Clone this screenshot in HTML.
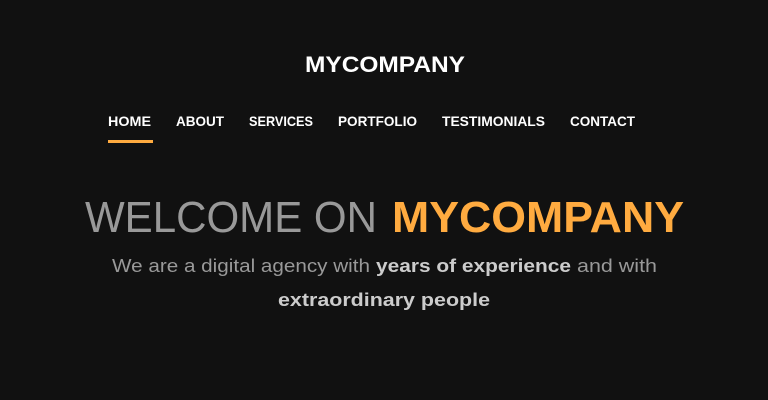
<!DOCTYPE html>
<html><head><meta charset="utf-8"><style>
html,body{margin:0;padding:0;background:#111;width:768px;height:400px;overflow:hidden}
svg{display:block}
text{font-family:"Liberation Sans",Arial,sans-serif}
</style></head><body>
<svg width="768" height="400" viewBox="0 0 768 400">
<rect width="768" height="400" fill="#111"/>
<text x="305" y="72" font-size="22" font-weight="bold" fill="#fff" textLength="160" lengthAdjust="spacingAndGlyphs">MYCOMPANY</text>
<g font-size="14" font-weight="bold" fill="#fff">
<text x="108" y="126" textLength="43" lengthAdjust="spacingAndGlyphs">HOME</text>
<text x="176" y="126" textLength="48" lengthAdjust="spacingAndGlyphs">ABOUT</text>
<text x="249" y="126" textLength="64" lengthAdjust="spacingAndGlyphs">SERVICES</text>
<text x="338" y="126" textLength="79" lengthAdjust="spacingAndGlyphs">PORTFOLIO</text>
<text x="442" y="126" textLength="103" lengthAdjust="spacingAndGlyphs">TESTIMONIALS</text>
<text x="570" y="126" textLength="65" lengthAdjust="spacingAndGlyphs">CONTACT</text>
</g>
<rect x="108" y="140" width="45" height="3" fill="#ffab40"/>
<text x="85" y="232" font-size="44" fill="#999" textLength="292" lengthAdjust="spacingAndGlyphs">WELCOME ON</text>
<text x="392" y="232" font-size="44" font-weight="bold" fill="#ffab40" textLength="292" lengthAdjust="spacingAndGlyphs">MYCOMPANY</text>
<text x="112" y="272" font-size="18" fill="#999" textLength="258" lengthAdjust="spacingAndGlyphs">We are a digital agency with</text>
<text x="376" y="272" font-size="18" font-weight="bold" fill="#ccc" textLength="195" lengthAdjust="spacingAndGlyphs">years of experience</text>
<text x="577" y="272" font-size="18" fill="#999" textLength="80" lengthAdjust="spacingAndGlyphs">and with</text>
<text x="278" y="306" font-size="18" font-weight="bold" fill="#ccc" textLength="212" lengthAdjust="spacingAndGlyphs">extraordinary people</text>
</svg>
</body></html>
